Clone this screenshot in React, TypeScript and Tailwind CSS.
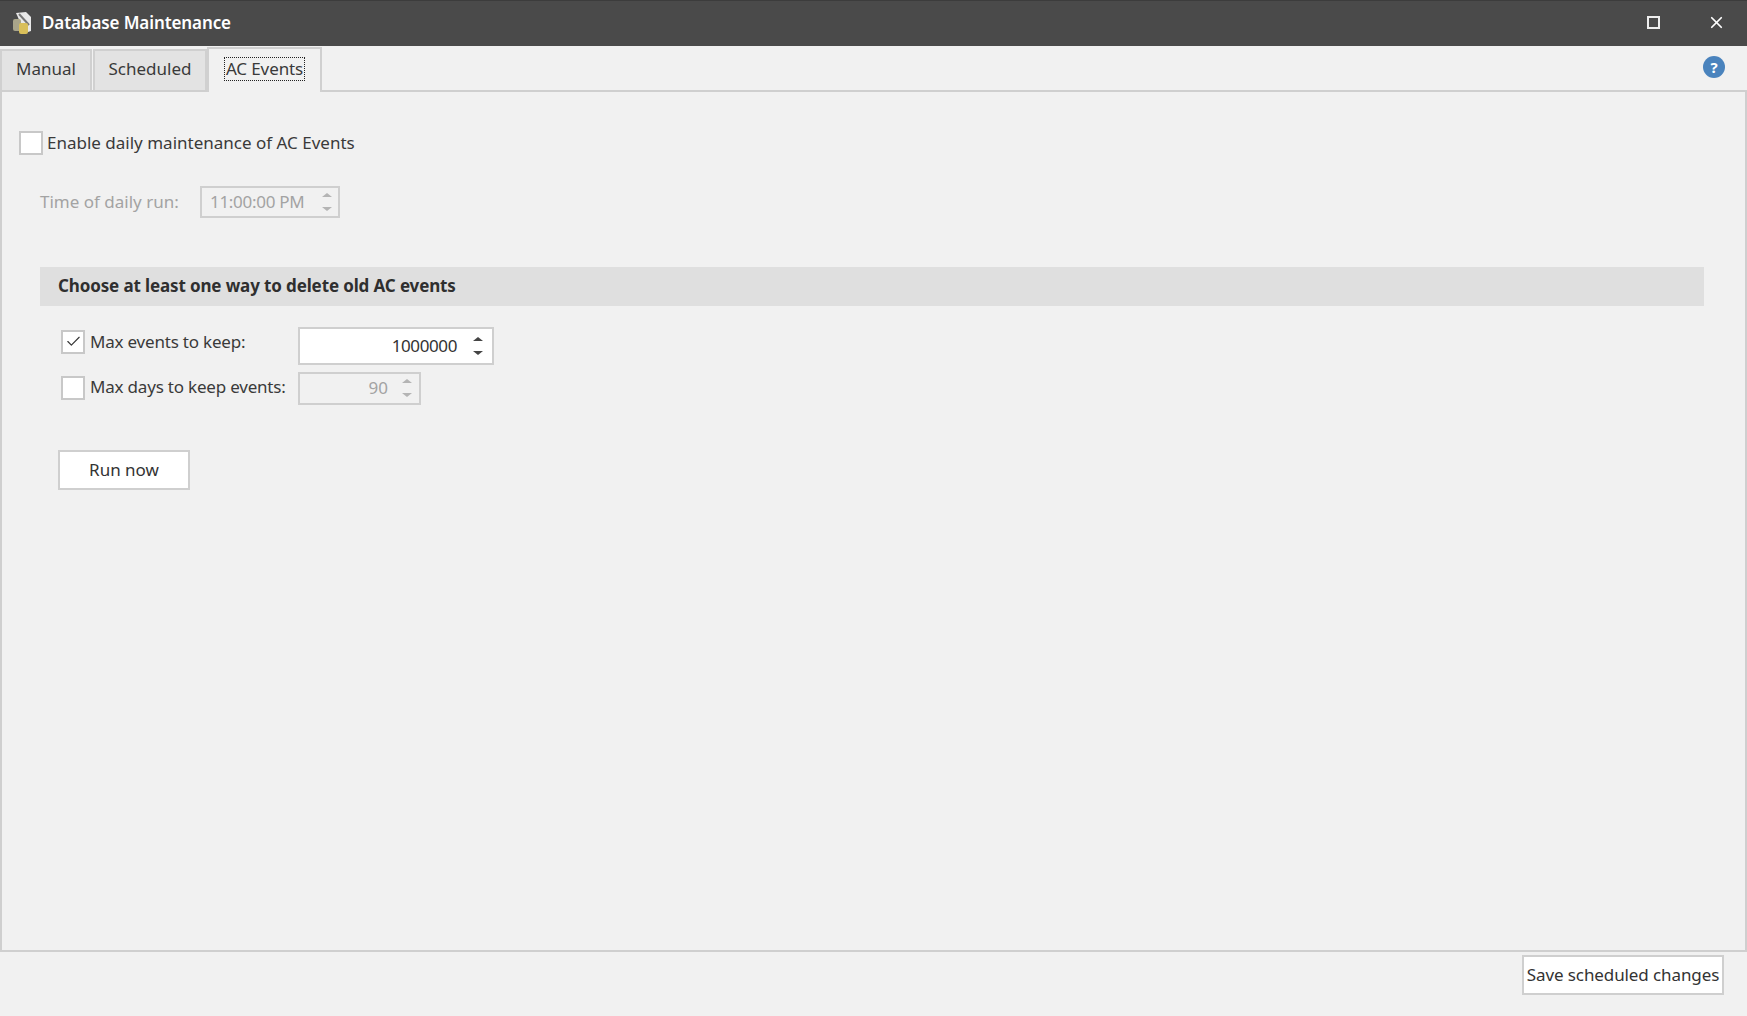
import { Check, X } from "lucide-react";

function CheckBox({ checked }: { checked?: boolean }) {
  return (
    <span className="flex h-[24px] w-[24px] shrink-0 items-center justify-center border-2 border-[#c8c8c8] bg-white">
      {checked && <Check size={17} strokeWidth={1.6} className="text-[#333]" />}
    </span>
  );
}

function Arrows({ disabled }: { disabled?: boolean }) {
  const color = disabled ? "border-[#b4b4b4]" : "border-[#444]";
  return (
    <span className="flex flex-col gap-[10px]">
      <span className={`h-0 w-0 border-x-[5px] border-b-[4px] border-x-transparent ${color}`} />
      <span className={`h-0 w-0 border-x-[5px] border-t-[4px] border-x-transparent ${color}`} />
    </span>
  );
}

function AppIcon() {
  return (
    <svg width="22" height="24" viewBox="0 0 22 24">
      <path d="M5 2 L15 1 L20 6 L20 20 L14 22 Z" fill="#e8e8e8" />
      <path d="M8 3 L18 14" stroke="#777" strokeWidth="2" />
      <rect x="2" y="8" width="8" height="12" rx="2" fill="#a9a58a" />
      <rect x="8" y="12" width="9" height="11" rx="2" fill="#d9bf5a" />
    </svg>
  );
}

export default function App() {
  return (
    <div className="flex h-[1016px] w-[1747px] flex-col overflow-hidden bg-[#f1f1f1] font-['Noto_Sans',sans-serif] text-[17px] text-[#3a3a3a]">
      <div className="flex h-[46px] shrink-0 items-center border-t border-[#3c3c3c] bg-[#4a4a4a] pb-[2px] pl-[11px] text-white">
        <AppIcon />
        <span className="ml-[9px] text-[17px] font-semibold tracking-[-0.1px]">Database Maintenance</span>
        <span className="ml-auto mr-[47px] h-[13px] w-[13px] border-2 border-[#eee]" />
        <X size={19} strokeWidth={2.2} className="mr-[21px]" />
      </div>

      <div className="flex h-[44px] shrink-0 items-end">
        <div className="flex h-[41px] w-[92px] items-center justify-center border-2 border-b-0 border-[#d0d0d0] bg-[#e3e3e3] pb-[3px]">Manual</div>
        <div className="ml-px flex h-[41px] w-[114px] items-center justify-center border-2 border-b-0 border-[#d0d0d0] bg-[#e3e3e3] pb-[3px]">Scheduled</div>
        <div className="relative z-10 -mb-[2px] flex h-[45px] w-[115px] items-center justify-center border-2 border-b-0 border-[#d0d0d0] bg-[#f1f1f1] pb-[3px]">
          <span className="border border-dotted border-[#222] px-px leading-[22px] tracking-[-0.1px]">AC Events</span>
        </div>
        <div className="mb-[12px] ml-auto mr-[22px] flex h-[22px] w-[22px] items-center justify-center rounded-full bg-[#4a83bd] text-[15px] font-bold leading-none text-white">?</div>
      </div>

      <div className="flex h-[862px] shrink-0 flex-col border-x-2 border-y-2 border-[#cfcfcf] pl-[17px] pt-[38px]">
        <label className="flex items-center gap-[4px]">
          <CheckBox />
          <span>Enable daily maintenance of AC Events</span>
        </label>

        <div className="mt-[30px] flex h-[32px] items-center pl-[21px] text-[#a3a3a3]">
          <span className="w-[160px]">Time of daily run:</span>
          <span className="flex h-[32px] w-[140px] items-center justify-between border-2 border-[#cfcfcf] pl-[8px] pr-[6px] tracking-[-0.3px]">
            11:00:00 PM
            <Arrows disabled />
          </span>
        </div>

        <div className="ml-[21px] mt-[49px] flex h-[39px] w-[1664px] items-center bg-[#dfdfdf] pl-[18px] font-bold tracking-[-0.13px] text-[#2f2f2f]">
          Choose at least one way to delete old AC events
        </div>

        <div className="ml-[42px] mt-[21px] flex h-[38px] items-center">
          <div className="flex w-[237px] items-center gap-[5px] self-start pt-[3px] tracking-[-0.2px]">
            <CheckBox checked />
            <span className="-mt-[1px]">Max events to keep:</span>
          </div>
          <span className="flex h-[38px] w-[196px] items-center justify-end gap-[16px] border-2 border-[#cfcfcf] bg-white pr-[9px] tracking-[-0.4px] text-[#333]">
            1000000
            <Arrows />
          </span>
        </div>

        <div className="ml-[42px] mt-[7px] flex h-[33px] items-center">
          <div className="flex w-[237px] items-center gap-[5px] tracking-[-0.2px]">
            <CheckBox />
            <span className="-mt-[3px]">Max days to keep events:</span>
          </div>
          <span className="flex h-[33px] w-[123px] items-center justify-end gap-[14px] border-2 border-[#cfcfcf] pr-[7px] text-[#a3a3a3]">
            90
            <Arrows disabled />
          </span>
        </div>

        <button className="ml-[39px] mt-[45px] h-[40px] w-[132px] border-2 border-[#cfcfcf] bg-white text-[#333]">Run now</button>
      </div>

      <div className="flex flex-1 justify-end pr-[23px] pt-[3px]">
        <button className="h-[40px] w-[202px] border-2 border-[#cfcfcf] bg-white tracking-[-0.1px] text-[#333]">Save scheduled changes</button>
      </div>
    </div>
  );
}
